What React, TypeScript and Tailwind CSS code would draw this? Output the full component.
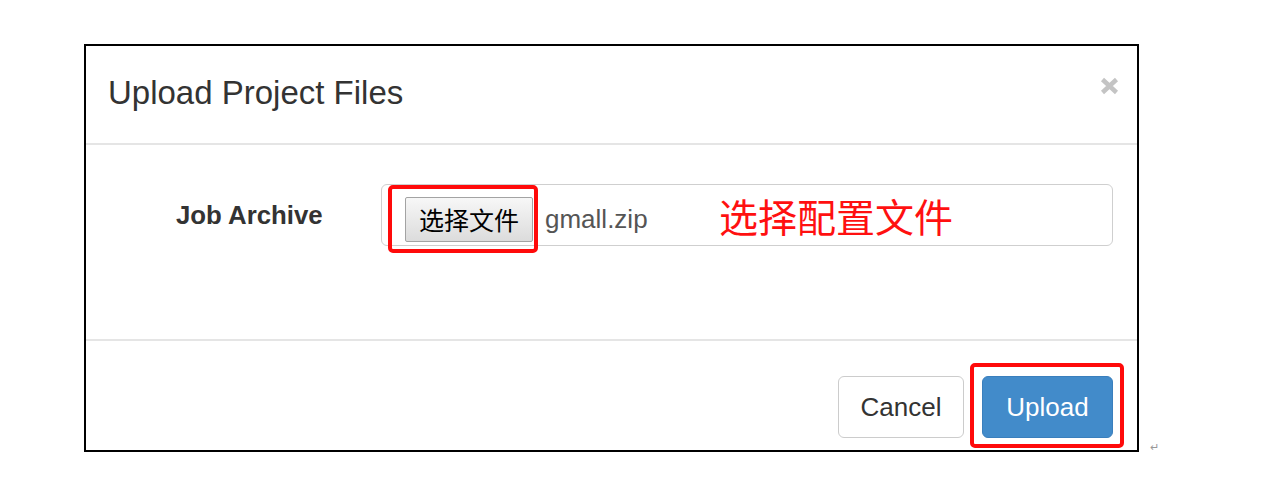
import React from "react";

const sans = "font-['Liberation_Sans','Noto_Sans_CJK_SC',Arial,sans-serif]";
const cjk = "font-['Noto_Sans_CJK_SC','Liberation_Sans',sans-serif]";

function CloseIcon() {
  return (
    <svg width="19" height="18" viewBox="0 0 19 18" aria-hidden="true">
      <path d="M2.5 2.5 L16.5 15.5 M16.5 2.5 L2.5 15.5" stroke="#c4c4c4" strokeWidth="4.5" strokeLinecap="butt" />
    </svg>
  );
}

export default function App() {
  return (
    <div className={`w-[1264px] h-[490px] bg-white pt-[44px] pl-[84px] flex items-end ${sans}`}>
      {/* Modal dialog */}
      <div className="w-[1055px] h-[408px] border-2 border-black flex flex-col self-start">
        {/* Header */}
        <div className="h-[99px] border-b-2 border-[#e5e5e5] flex justify-between items-start pl-[22px] pr-[18px]">
          <h1 className="pt-[30px] text-[33px] leading-[33px] text-[#333]">Upload Project Files</h1>
          <button type="button" className="mt-[31px]">
            <CloseIcon />
          </button>
        </div>

        {/* Body */}
        <div className="h-[196px] border-b-2 border-[#e5e5e5] pt-[39px] flex items-start">
          <label className="w-[295px] h-[62px] pl-[90px] flex items-center text-[25.8px] font-bold text-[#333]">
            Job Archive
          </label>
          <div className="relative w-[732px] h-[62px] border border-[#cfcfcf] rounded-[6px] flex items-start pl-[23px] pt-[12px]">
            <div className="relative">
              <button
                type="button"
                className={`w-[128px] h-[45px] border border-[#a3a3a3] rounded-[2px] bg-gradient-to-b from-[#f7f7f7] to-[#dcdcdc] text-[25px] text-black flex items-center justify-center ${cjk}`}
              >
                选择文件
              </button>
              <div className="absolute left-[-17px] top-[-12px] w-[150px] h-[68px] border-4 border-[#ff0a0a] rounded-[5px]" />
            </div>
            <span className="ml-[12px] h-[45px] flex items-center text-[26px] text-[#555]">gmall.zip</span>
            <span className={`absolute left-[337px] top-[6px] text-[39px] leading-[48px] text-[#ff1010] ${cjk}`}>
              选择配置文件
            </span>
          </div>
        </div>

        {/* Footer */}
        <div className="flex-1 flex justify-end items-start pt-[35px] pr-[24px] gap-[18px]">
          <button
            type="button"
            className="w-[126px] h-[62px] border border-[#ccc] rounded-[6px] bg-white text-[26px] text-[#333]"
          >
            Cancel
          </button>
          <div className="relative">
            <button
              type="button"
              className="w-[131px] h-[62px] border border-[#3a7fbd] rounded-[6px] bg-[#428bca] text-[26px] text-white"
            >
              Upload
            </button>
            <div className="absolute left-[-12px] top-[-13px] w-[154px] h-[85px] border-4 border-[#ff0a0a] rounded-[5px]" />
          </div>
        </div>
      </div>
      <span className="ml-[11px] mb-[37px] text-[11px] leading-[11px] text-[#999]">↵</span>
    </div>
  );
}
